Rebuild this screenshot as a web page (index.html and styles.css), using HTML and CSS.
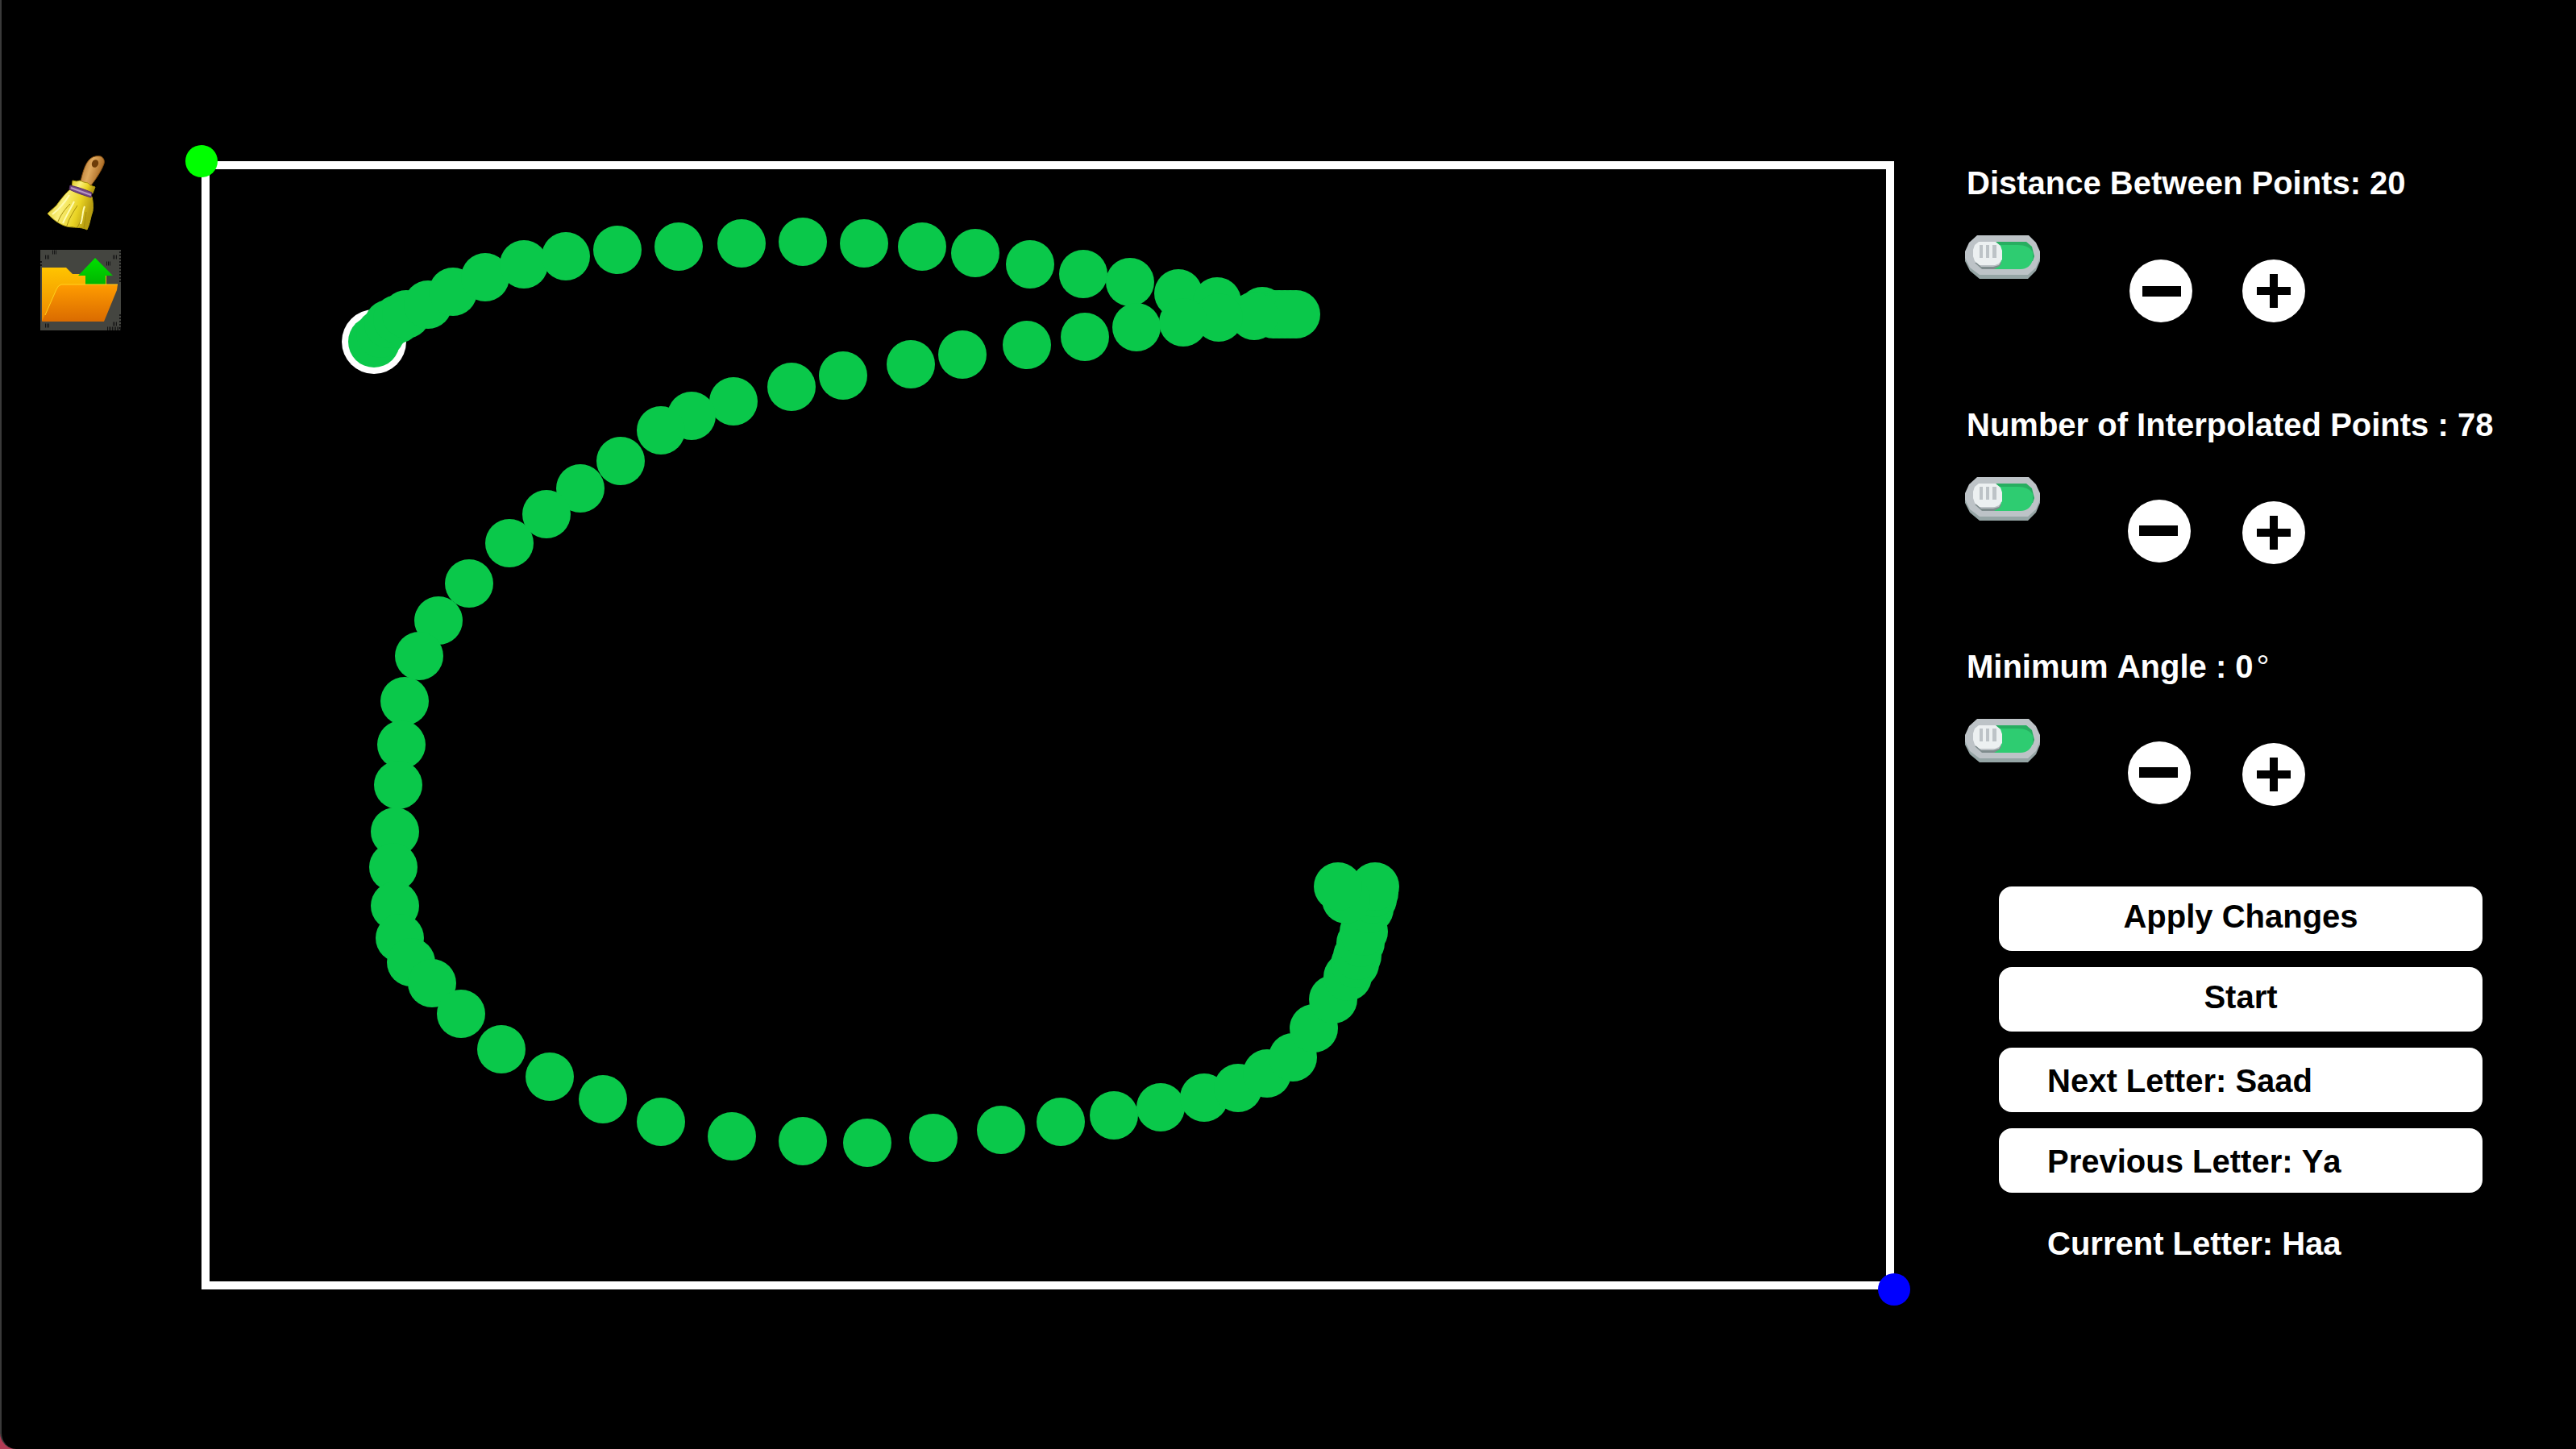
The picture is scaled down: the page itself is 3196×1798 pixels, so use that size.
FILE: index.html
```html
<!DOCTYPE html>
<html lang="en">
<head>
<meta charset="utf-8">
<title>Letter Tracing Editor</title>
<link rel="stylesheet" href="styles.css">
</head>
<body>
<svg class="defs" aria-hidden="true">
  <defs>
    <symbol id="toggle-on" viewBox="0 0 94 54">
      <path fill="#95a5a5" d="M14 3h66l8 8 5 12v9l-5 12-10 10H18L6 44 0 32v-9L6 11z"/>
      <path fill="#bdc3c7" d="M15 0h64l9 9 5 11v8l-5 12-10 9H18L6 40 0 28v-8L5 9z"/>
      <path fill="#27ae60" d="M38 8h38l7 6 3 12-2 6H38z"/>
      <path fill="#2ecc71" d="M38 12h28c8 0 15 3 18 9v9c-2 8-8 12-15 12H34z"/>
      <path fill="#7f8c8d" d="M12 34h33l-2 4-7 4H21z"/>
      <path fill="#bdc3c7" d="M12 32h33l-3 5-7 2H20z"/>
      <path fill="#ecf0f1" d="M17 8h21l6 5 2 6v11l-4 5-5 2H18l-6-5-2-6v-8l2-6z"/>
      <path fill="#bdc3c7" d="M18 12h4v16h-4zM26 12h4v16h-4zM34 12h5v16h-5z"/>
    </symbol>
    <symbol id="minus" viewBox="0 0 80 80">
      <circle cx="39" cy="39" r="39" fill="#fff"/>
      <path fill="#000" d="M14 32h48v13H14z"/>
    </symbol>
    <symbol id="plus" viewBox="0 0 80 80">
      <circle cx="41" cy="41" r="39" fill="#fff"/>
      <path fill="#000" d="M36 20h10v16h16v10H46v16H36V46H20V36h16z"/>
    </symbol>
  </defs>
</svg>
<main class="editor">
  <nav class="tools">
    <button class="tool" type="button" aria-label="Clear">
      <svg viewBox="0 0 100 100">
        <defs>
          <linearGradient id="handle" x1="0" y1="0" x2="1" y2="0.4"><stop offset="0" stop-color="#a86a28"/><stop offset="0.5" stop-color="#e0a95e"/><stop offset="1" stop-color="#a4641f"/></linearGradient>
          <linearGradient id="straw" x1="0" y1="0" x2="1" y2="0.3"><stop offset="0" stop-color="#d9c423"/><stop offset="0.4" stop-color="#fbf07c"/><stop offset="0.75" stop-color="#e9d323"/><stop offset="1" stop-color="#b89d10"/></linearGradient>
        </defs>
        <g transform="translate(0 2)">
          <path fill="url(#handle)" stroke="#8a5212" stroke-width="1" d="M50 33c2-9 5-20 10-26 4-5 10-6 15-5 4 2 5 6 4 9-3 9-10 19-16 27z"/>
          <ellipse cx="68" cy="11" rx="4" ry="5" transform="rotate(25 68 11)" fill="#6d3c08"/>
          <path fill="url(#straw)" stroke="#a8950d" stroke-width="1" d="M40 32l5 1 4-1 5 2 5 1 3 3 6 2-3 8-26-7z"/>
          <path fill="url(#straw)" stroke="#b6a211" stroke-width="1" d="M38 42c-7 6-13 14-18 21L9 73c7 8 16 14 24 16 8 2 17 0 25 4 4-8 4-15 7-23 1-7 0-14-1-18z"/>
          <path fill="none" stroke="#a68e0c" stroke-width="1" d="M22 83c3-8 9-16 15-22M33 88c3-10 8-17 13-25M46 90c3-5 5-10 6-15M54 91c1-7 2-12 3-20"/>
          <path fill="none" stroke="#fffbb0" stroke-width="2" d="M15 74c9-7 15-14 21-24M28 85c5-11 9-17 14-27M50 86c3-8 2-15 5-22"/>
          <path fill="#754887" stroke="#563165" stroke-width="1" d="M37 38c9 2 18 5 27 9l-1 6c-10-3-19-6-27-10z"/>
          <path fill="none" stroke="#b89ac4" stroke-width="2" d="M38 41l25 9"/>
        </g>
      </svg>
    </button>
    <button class="tool" type="button" aria-label="Load">
      <svg viewBox="0 0 100 100">
        <defs>
          <linearGradient id="back" x1="0" y1="0" x2="0" y2="1"><stop offset="0" stop-color="#ffc400"/><stop offset="1" stop-color="#ee8700"/></linearGradient>
          <linearGradient id="front" x1="0" y1="0" x2="0" y2="1"><stop offset="0" stop-color="#ff9c00"/><stop offset="1" stop-color="#da6b00"/></linearGradient>
          <linearGradient id="arrow" x1="0" y1="0" x2="0" y2="1"><stop offset="0" stop-color="#00e000"/><stop offset="1" stop-color="#00b400"/></linearGradient>
        </defs>
        <path fill="#444540" d="M0 0h100v100H0z"/>
        <path fill="none" stroke="#151515" stroke-width="5" stroke-dasharray="1 1" d="M6 9h6M15 3h6M90 9h6M82 17h6M6 94h6M90 92h6M83 98h17"/>
        <path fill="none" stroke="#151515" stroke-width="2" stroke-dasharray="2 2" d="M99 2v40M99 80v20M1 14v8"/>
        <path fill="url(#back)" d="M2 22h30l8 8h42v30L70 88H2z"/>
        <path fill="url(#arrow)" d="M68 10l22 22h-9v12H56V32h-9z"/>
        <path fill="url(#front)" d="M26 43h70l-1 7-16 39H2l19-42z"/>
        <path fill="none" stroke="#ffd21c" stroke-width="1" d="M96 43H26q-4 1-6 6L6 81"/>
      </svg>
    </button>
  </nav>

  <svg class="canvas" viewBox="0 0 2100 1400" role="img" aria-label="Letter points">
    <rect class="frame" x="5" y="5" width="2090" height="1390"/>
    <circle class="corner-start" cx="0" cy="0" r="20"/>
    <circle class="corner-end" cx="2100" cy="1400" r="20"/>
    <circle class="cursor" cx="214" cy="224" r="40"/>
    <g id="points" class="points"></g>
  </svg>

  <aside class="panel">
    <section class="setting">
      <label class="caption" for="distance">Distance Between Points: 20</label>
      <div class="controls">
        <span class="toggle"><input id="distance" type="checkbox" checked><svg><use href="#toggle-on"/></svg></span>
        <button class="step flipped" type="button" aria-label="Decrease"><svg><use href="#minus"/></svg></button>
        <button class="step" type="button" aria-label="Increase"><svg><use href="#plus"/></svg></button>
      </div>
    </section>
    <section class="setting">
      <label class="caption" for="count">Number of Interpolated Points : 78</label>
      <div class="controls">
        <span class="toggle"><input id="count" type="checkbox" checked><svg><use href="#toggle-on"/></svg></span>
        <button class="step" type="button" aria-label="Decrease"><svg><use href="#minus"/></svg></button>
        <button class="step" type="button" aria-label="Increase"><svg><use href="#plus"/></svg></button>
      </div>
    </section>
    <section class="setting">
      <label class="caption" for="angle">Minimum Angle : 0<span class="degree">°</span></label>
      <div class="controls">
        <span class="toggle"><input id="angle" type="checkbox" checked><svg><use href="#toggle-on"/></svg></span>
        <button class="step" type="button" aria-label="Decrease"><svg><use href="#minus"/></svg></button>
        <button class="step" type="button" aria-label="Increase"><svg><use href="#plus"/></svg></button>
      </div>
    </section>
    <div class="actions">
      <button class="action" type="button">Apply Changes</button>
      <button class="action" type="button">Start</button>
      <button class="action letter" type="button">Next Letter: Saad</button>
      <button class="action letter" type="button">Previous Letter: Ya</button>
      <p class="current">Current Letter: Haa</p>
    </div>
  </aside>
</main>
<script src="points.js"></script>
</body>
</html>
```
FILE: styles.css
```css
* {
  box-sizing: border-box;
}

html {
  background: #b23a54;
}

body {
  margin: 0;
  min-height: 100vh;
  background: #000;
  border-left: 2px solid #3a3a3a;
  border-bottom-left-radius: 20px;
  color: #fff;
  font: bold 40px/46px "Liberation Sans", Arial, sans-serif;
  font-kerning: none;
}

button {
  border: 0;
  padding: 0;
  background: none;
  color: inherit;
  font: inherit;
  font-kerning: inherit;
  cursor: pointer;
}

svg {
  display: block;
}

.defs {
  position: absolute;
  width: 0;
  height: 0;
}

.editor {
  display: grid;
  grid-template-columns: 248px minmax(0, 1fr) 846px;
  align-items: start;
  padding-top: 200px;
}

/* Left toolbar */
.tools {
  display: flex;
  flex-direction: column;
  gap: 20px;
  padding: 0 48px;
  margin-top: -10px;
}

.tool,
.tool svg {
  width: 100px;
  height: 100px;
}

/* Drawing area */
.canvas {
  width: 100%;
  overflow: visible;
}

.frame {
  fill: none;
  stroke: #fff;
  stroke-width: 10;
}

.corner-start {
  fill: #0f0;
}

.corner-end {
  fill: #00f;
}

.cursor {
  fill: #fff;
}

.points {
  fill: #0ac84a;
}

/* Settings panel */
.panel {
  padding: 4px 116px 0 90px;
}

.setting {
  height: 300px;
}

.caption {
  display: block;
  white-space: nowrap;
}

.degree {
  font-weight: normal;
  margin-left: 4px;
}

.controls {
  display: grid;
  grid-template-columns: 200px 140px 80px;
  align-items: start;
  padding-top: 42px;
}

.toggle {
  display: grid;
  width: 94px;
  height: 54px;
  margin-left: -2px;
}

.toggle input,
.toggle svg {
  grid-area: 1 / 1;
  width: 94px;
  height: 54px;
  margin: 0;
}

.toggle input {
  appearance: none;
}

.toggle svg {
  pointer-events: none;
}

.step {
  width: 80px;
  margin-top: 28px;
}

.step svg {
  width: 80px;
  height: 80px;
}

.flipped svg {
  transform: rotate(180deg);
}

.actions {
  display: flex;
  flex-direction: column;
  gap: 20px;
  padding-left: 40px;
  margin-top: -4px;
}

.action {
  height: 80px;
  border-radius: 16px;
  background: #fff;
  color: #000;
  padding-bottom: 6px;
}

.letter {
  padding: 2px 60px 0;
  text-align: left;
}

.current {
  margin: 0;
  padding: 20px 60px 0;
}
```
FILE: points.js
```js
// Stroke points in canvas units, from the first point to the last.
const stroke = [
  [222, 214], [232, 202], [243, 196], [254, 190], [281, 178], [312, 162],
  [352, 144], [400, 128], [452, 118], [516, 110], [592, 106], [670, 102],
  [746, 100], [822, 102], [894, 106], [960, 114], [1028, 128], [1094, 140],
  [1152, 150], [1212, 164], [1260, 174], [1316, 186], [1330, 190],
  [1337, 190], [1344, 190], [1351, 190], [1358, 190],
  [1306, 192], [1262, 194], [1218, 200], [1160, 206], [1096, 218], [1024, 228],
  [944, 240], [880, 252], [796, 266], [732, 280], [660, 298], [608, 316],
  [570, 334], [520, 372], [470, 406], [428, 438], [382, 474], [332, 524],
  [294, 570], [270, 614], [252, 670], [248, 724], [244, 774], [240, 832],
  [238, 876], [240, 924], [246, 964], [260, 994], [286, 1020], [322, 1058],
  [372, 1102], [432, 1136], [498, 1164], [570, 1192], [658, 1210], [746, 1216],
  [826, 1218], [908, 1212], [992, 1202], [1066, 1192], [1132, 1184],
  [1190, 1174], [1244, 1162], [1286, 1150], [1322, 1132], [1354, 1112],
  [1380, 1076], [1404, 1040], [1422, 1012], [1431, 996], [1434, 986],
  [1438, 970], [1442, 956], [1449, 928], [1453, 916], [1455, 908],
  [1456, 900], [1420, 916], [1410, 900]
];

const group = document.getElementById("points");

function addPoint(x, y, r) {
  const dot = document.createElementNS("http://www.w3.org/2000/svg", "circle");
  dot.setAttribute("cx", x);
  dot.setAttribute("cy", y);
  dot.setAttribute("r", r);
  group.appendChild(dot);
}

addPoint(214, 224, 32);
stroke.forEach(([x, y]) => addPoint(x, y, 30));
```
